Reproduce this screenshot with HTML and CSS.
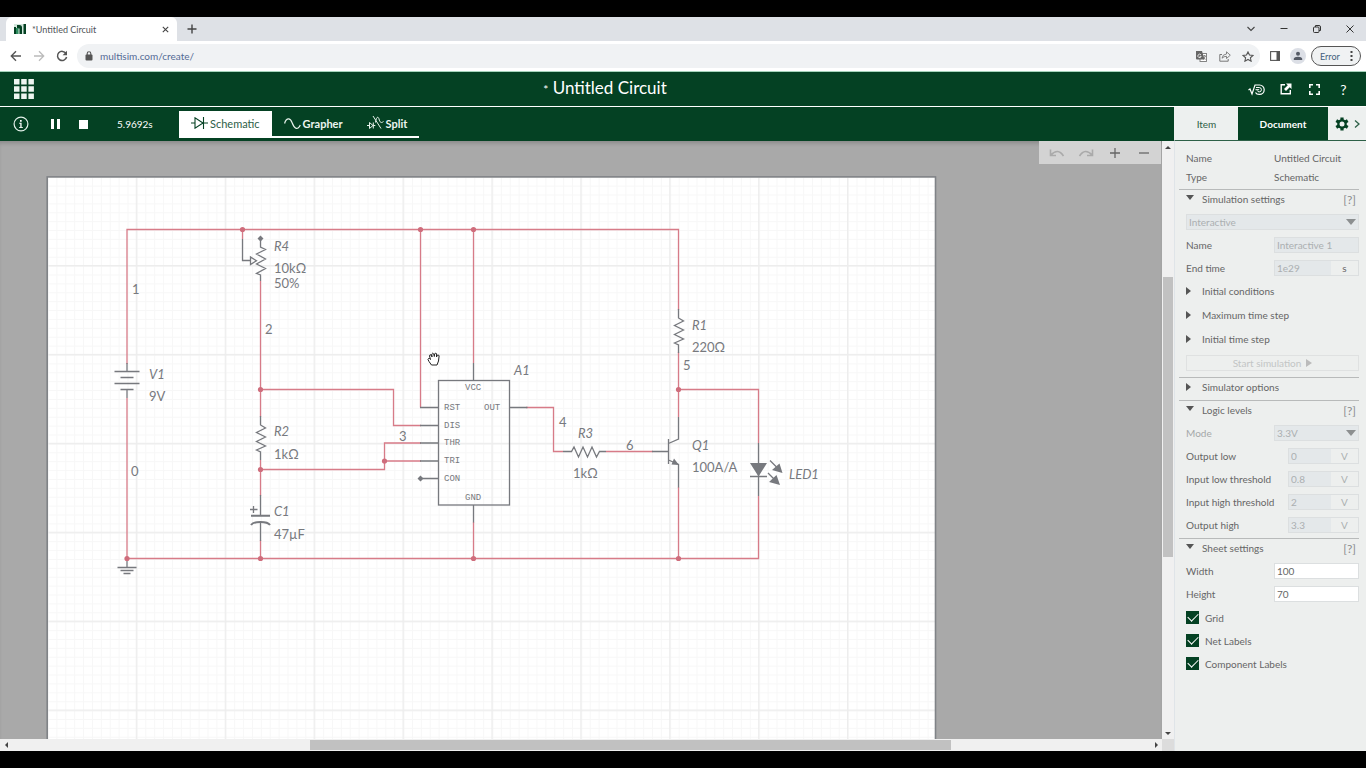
FILE: index.html
```html
<!DOCTYPE html>
<html lang="en">
<head>
<meta charset="utf-8">
<title>*Untitled Circuit</title>
<link rel="stylesheet" href="styles.css">
</head>
<body>
<div class="window">
  <div class="tabstrip">
    <div class="tab">
      <svg class="favicon" width="12" height="10" viewBox="0 0 12 10"><rect width="12" height="10" fill="#d3e6dc"/><path d="M0 3h2v7H0zM3 1h2.500q2.500 0 2.500 2.500V10H5.500V4.500H3zM9.500 0H12v10H9.500z" fill="#044123"/><path d="M2 4h2.500v6H2z" fill="#2c8a5e"/></svg>
      <span class="tab-title">*Untitled Circuit</span>
      <button class="ghost tab-close" aria-label="Close tab"><svg width="7" height="7" viewBox="0 0 7 7"><path d="M.8.8l5.400 5.400M6.200.8L.8 6.200" stroke="#444" stroke-width="1.100"/></svg></button>
    </div>
    <button class="ghost newtab" aria-label="New tab"><svg width="10" height="10" viewBox="0 0 10 10"><path d="M5 .5v9M.5 5h9" stroke="#444" stroke-width="1.400"/></svg></button>
    <div class="wincontrols">
      <button class="ghost" aria-label="Tab search"><svg width="10" height="8" viewBox="0 0 10 8"><path d="M1.500 2L5 5.500 8.500 2" fill="none" stroke="#444" stroke-width="1.100"/></svg></button>
      <button class="ghost" aria-label="Minimize"><svg width="8" height="8" viewBox="0 0 8 8"><path d="M.5 3.500h7" stroke="#333"/></svg></button>
      <button class="ghost" aria-label="Restore"><svg width="8" height="8" viewBox="0 0 8 8"><rect x=".5" y="2" width="5.500" height="5.500" rx="1" fill="none" stroke="#333"/><path d="M2.500 2V.5H6q1.500 0 1.500 1.500v3.500H6" fill="none" stroke="#333"/></svg></button>
      <button class="ghost" aria-label="Close"><svg width="8" height="8" viewBox="0 0 8 8"><path d="M.5.5l7 7M7.500.5l-7 7" stroke="#333"/></svg></button>
    </div>
  </div>

  <div class="navbar">
    <button class="ghost nav" aria-label="Back"><svg width="12" height="12" viewBox="0 0 12 12"><path d="M11 6H1.500M6 1.300L1.300 6 6 10.700" fill="none" stroke="#555" stroke-width="1.400"/></svg></button>
    <button class="ghost nav" aria-label="Forward"><svg width="12" height="12" viewBox="0 0 12 12"><path d="M1 6h9.500M6 1.300L10.700 6 6 10.700" fill="none" stroke="#bbb" stroke-width="1.300"/></svg></button>
    <button class="ghost nav" aria-label="Reload"><svg width="12" height="12" viewBox="0 0 12 12"><path d="M10 3.500A4.600 4.600 0 1 0 10.600 7" fill="none" stroke="#555" stroke-width="1.500"/><path d="M11 .8v4.400H6.600z" fill="#555"/></svg></button>
    <div class="omnibox">
      <svg width="8" height="10" viewBox="0 0 8 10"><rect x=".5" y="3.500" width="7" height="6" rx="1" fill="#555"/><path d="M2.200 4V2.600a1.800 1.800 0 0 1 3.600 0V4" fill="none" stroke="#555" stroke-width="1.100"/></svg>
      <input class="url" type="text" aria-label="Address" value="multisim.com/create/">
      <button class="ghost small" aria-label="Translate"><svg width="11" height="11" viewBox="0 0 11 11"><rect x="4" y="2.500" width="6.500" height="8" fill="#fff" stroke="#777" stroke-width=".9"/><path d="M0 0h6l2.500 8.500H1Q0 8.500 0 7.500z" fill="#666"/><path d="M5 4a1.700 1.700 0 1 0 .2 1.400H3.600" fill="none" stroke="#fff" stroke-width=".8"/><path d="M7 5h3M8.500 4v1M7.500 8.500L9.500 5M7.500 6l2 2.500" stroke="#666" stroke-width=".7" fill="none"/></svg></button>
      <button class="ghost small" aria-label="Share"><svg width="12" height="11" viewBox="0 0 12 11"><path d="M3 3.500H.8v6.700h8.400V8" fill="none" stroke="#777"/><path d="M3 7.200Q3.500 3.200 7.500 3V.8l3.800 3.400-3.800 3.300V5.300Q4.800 5.300 3 7.200z" fill="none" stroke="#777" stroke-width=".9"/></svg></button>
      <button class="ghost small" aria-label="Bookmark"><svg width="12" height="11" viewBox="0 0 12 11"><path d="M6 .9l1.500 3.200 3.500.4-2.600 2.300.7 3.400L6 8.500l-3.100 1.700.7-3.400L1 4.500l3.500-.4z" fill="none" stroke="#555" stroke-width="1.100"/></svg></button>
    </div>
    <button class="ghost side" aria-label="Side panel"><svg width="10" height="10" viewBox="0 0 10 10"><rect x=".6" y=".6" width="8.800" height="8.800" fill="none" stroke="#555" stroke-width="1.100"/><path d="M6.500 0H10v10H6.500z" fill="#555"/></svg></button>
    <button class="ghost avatar" aria-label="Profile"><svg width="10" height="10" viewBox="0 0 10 10"><circle cx="5" cy="2.800" r="2" fill="#555b66"/><path d="M.8 9V7.800Q1.200 5.800 5 5.800t4.200 2V9z" fill="#555b66"/></svg></button>
    <button class="errorpill">Error <svg width="3" height="10" viewBox="0 0 3 10"><path d="M.5 0h2v2h-2zM.5 4h2v2h-2zM.5 8h2v2h-2z" fill="#444"/></svg></button>
  </div>

  <header class="appbar">
    <button class="ghost appmenu" aria-label="Applications"><svg width="20" height="20" viewBox="0 0 20 20"><path d="M0 0h5.500v5.500H0zM7.200 0h5.500v5.500H7.200zM14.400 0h5.500v5.500h-5.500zM0 7.200h5.500v5.500H0zM7.200 7.200h5.500v5.500H7.200zM14.400 7.200h5.500v5.500h-5.500zM0 14.400h5.500v5.500H0zM7.200 14.400h5.500v5.500H7.200zM14.400 14.400h5.500v5.500h-5.500z" fill="#edf5f0"/></svg></button>
    <h1 class="doc-title"><span class="dirty">*</span> Untitled Circuit</h1>
    <div class="appactions">
      <button class="ghost" aria-label="Activate"><svg width="17" height="13" viewBox="0 0 17 13"><path d="M.5 7l1.500-1 2 5L7 2h4.500a4.700 4.700 0 0 1 0 9.400Q8.500 11.500 7.500 9.500" fill="none" stroke="#fff" stroke-width="1.200"/><path d="M8 4.500h3.200a2.200 2.200 0 0 1 0 4.400Q9.700 8.900 9.300 7.500M7.500 6.700h3.700" fill="none" stroke="#fff" stroke-width="1"/></svg></button>
      <button class="ghost" aria-label="Open in new window"><svg width="12" height="12" viewBox="0 0 12 12"><path d="M5 1.700H1.200v9.100h9.100V7" fill="none" stroke="#fff" stroke-width="1.400"/><path d="M6 .5h5.500V6L9.700 4.300 6 8 4 6l3.800-3.700z" fill="#fff"/></svg></button>
      <button class="ghost" aria-label="Full screen"><svg width="11" height="11" viewBox="0 0 11 11"><path d="M.8 4V.8H4M7 .8h3.200V4M10.200 7v3.200H7M4 10.200H.8V7" fill="none" stroke="#fff" stroke-width="1.600"/></svg></button>
      <button class="ghost help" aria-label="Help">?</button>
    </div>
  </header>

  <div class="toolbar">
    <div class="simbar">
      <button class="ghost info" aria-label="Information"><svg width="16" height="16" viewBox="0 0 16 16"><circle cx="8" cy="8" r="6.900" fill="none" stroke="#e3f0e9" stroke-width="1.200"/><path d="M7 4h1.700v1.700H7zM6.200 6.800h2.400V12H7.300V7.800H6.200zM6 11.300h4V12H6z" fill="#fff"/></svg></button>
      <button class="ghost pause" aria-label="Pause"><svg width="9" height="10" viewBox="0 0 9 10"><path d="M0 0h3v10H0zM6 0h3v10H6z" fill="#fff"/></svg></button>
      <button class="ghost stop" aria-label="Stop"><svg width="9" height="9" viewBox="0 0 9 9"><path d="M0 0h9v9H0z" fill="#fff"/></svg></button>
      <span class="simtime">5.9692s</span>
      <div class="views">
        <button class="view active"><svg width="17" height="12" viewBox="0 0 17 12"><path d="M0 6h4M4 .8v10.400L12 6zM12.500 0v12M12 6h5" fill="none" stroke="#044123" stroke-width="1.100"/></svg>Schematic</button>
        <button class="view"><svg width="17" height="13" viewBox="0 0 17 13"><path d="M.6 6.500C2 1 6 .2 8 5.500S13.500 14.500 16.300 8" fill="none" stroke="#e8f3ec" stroke-width="1.200"/></svg>Grapher</button>
        <button class="view"><svg width="17" height="14" viewBox="0 0 17 14"><path d="M0 9.500h2.500M2.500 6.500v6L6 9.500zM6.300 6.500v6M6.300 9.500h2M6 0l8 12.500M8.500 6.500c.5-5 2.500-7 3.500-3.500s2 4.500 4.500 2.500" fill="none" stroke="#e8f3ec" stroke-width="1"/></svg>Split</button>
      </div>
    </div>
    <div class="paneltabs">
      <button class="ptab">Item</button>
      <button class="ptab current">Document</button>
      <button class="ptab gear" aria-label="Settings"><svg width="25" height="14" viewBox="0 0 25 14"><g stroke="#044123" stroke-width="3.200"><path d="M7 .4v13.200M1.300 3.700l11.400 6.600M12.700 3.700L1.300 10.300"/></g><circle cx="7" cy="7" r="4.800" fill="#044123"/><circle cx="7" cy="7" r="2.500" fill="#edf0ef"/><path d="M20 3.500L24 7l-4 3.500" fill="none" stroke="#2d6047" stroke-width="1.300"/></svg></button>
    </div>
  </div>

  <main class="workspace">
    <div class="editor">
      <div class="canvas">
        <svg class="sheet" width="889" height="622" viewBox="47 177 889 622" role="img" aria-label="Schematic sheet">
          <defs>
            <pattern id="minor" x="47.500" y="176.700" width="8.890" height="8.890" patternUnits="userSpaceOnUse"><path d="M0 .5H8.890M.5 0V8.890" stroke="#f7f7f7"/></pattern>
            <pattern id="major" x="46.900" y="176.100" width="88.900" height="88.900" patternUnits="userSpaceOnUse"><path d="M0 .7H88.900M.7 0V88.900" stroke="#ededed" stroke-width="1.400"/></pattern>
          </defs>
          <rect x="47" y="177" width="889" height="622" fill="#fff"/>
          <rect x="47" y="177" width="889" height="622" fill="url(#minor)"/>
          <rect x="47" y="177" width="889" height="622" fill="url(#major)"/>
          <rect x="47.200" y="176.900" width="888.300" height="622" fill="none" stroke="#808387" stroke-width="1.600"/>
          <g class="wire">
            <path d="M127 364V229.500H678.500V310M242.500 229.500V239M420.500 229.500V407.500M473.500 229.500V363M260.500 281V417M260.500 389.500H393.500V425.500H421M260.500 460V496M260.500 469.500H384.500V443H421M384.500 461H421M127 398V558.500H758.500V496M260.500 540V558.500M473.500 522V558.500M526 407.500H553.500V451.500H563M606 451.500H653M678.500 352V417M678.500 389.500H758.500V443M678.500 487V558.500"/>
          </g>
          <g class="part">
            <path d="M127 363V371M114.500 371.500h25M120.500 377.500h13M114.500 383.500h25M120.500 389.500h13M127 390v8M127 559v8M117.500 567.500h19M120.500 570.500h13M123.500 573.500h7"/>
            <path d="M242.500 239v21.500h8M250.500 257v7.500l6-3.800zM260.500 239v8l5 2.500-9 4.500 9 5-9 5 9 4.500-9 5 4 1.500v6"/>
            <path d="M260.500 416v9l5 3-9 4.500 9 4.500-9 4.500 9 4.500-9 4 4 2v8"/>
            <path d="M678.500 309v9l5 3-9 4.500 9 4.500-9 4.500 9 4.500-9 4 4 2v8"/>
            <path d="M563 451.500h8.500l2.500-4.500 4.500 10 4.500-10 4.500 10 4.500-10 4.500 10 3-5.500h6.500"/>
            <path d="M260.500 495v20.500M260.500 522v19M250 509.500h7.500M253.500 506v7"/>
            <path d="M251 515.800h19M251 525q2-3 9.500-3t9.500 3" stroke-width="2"/>
            <rect x="438.500" y="380.500" width="71" height="124.500"/>
            <path d="M473.500 363v17.500M473.500 505v17.500M420 407.500h18.500M420 425.500h18.500M420 443h18.500M420 461h18.500M420 478.500h18.500M509.500 407.500h18"/>
            <path d="M652 451.500h17M668.500 439v25M668.500 443.500l10-4.500v-22M668.500 460l10 4.500v23"/>
            <path class="solid" d="M671.500 464.500l2.500-6 5 6.500z"/>
            <path d="M758.500 443v53M750 476.500h17M770 460.500l8 8M768 473l7 7"/>
            <path class="solid" d="M750 463h17l-8.500 13.500zM779.500 463.500l3 9.500-10.500-3zM776.500 475l3.500 10-11-3z"/>
            <path class="solid" d="M260.500 235.500l3 3-3 3-3-3zM420.500 475.500l3 3-3 3-3-3z"/>
          </g>
          <g class="node"><circle cx="242.500" cy="229.500" r="2.600"/><circle cx="420.500" cy="229.500" r="2.600"/><circle cx="473.500" cy="229.500" r="2.600"/><circle cx="260.500" cy="389.500" r="2.600"/><circle cx="260.500" cy="469.500" r="2.600"/><circle cx="384.500" cy="461" r="2.600"/><circle cx="678.500" cy="389.500" r="2.600"/><circle cx="127" cy="558.500" r="2.600"/><circle cx="260.500" cy="558.500" r="2.600"/><circle cx="473.500" cy="558.500" r="2.600"/><circle cx="678.500" cy="558.500" r="2.600"/></g>
          <g class="label">
            <text x="132" y="294">1</text><text x="265" y="334">2</text><text x="399" y="441">3</text><text x="559" y="427">4</text><text x="683" y="370">5</text><text x="626" y="450">6</text><text x="131" y="476">0</text>
            <text x="149" y="401">9V</text><text x="274" y="273">10kΩ</text><text x="274" y="288">50%</text><text x="274" y="459">1kΩ</text><text x="274" y="539">47µF</text><text x="573" y="478">1kΩ</text><text x="692" y="352">220Ω</text><text x="692" y="472">100A/A</text>
          </g>
          <g class="label refdes">
            <text x="149" y="379">V1</text><text x="274" y="251">R4</text><text x="274" y="436">R2</text><text x="274" y="516">C1</text><text x="514" y="375">A1</text><text x="578" y="438">R3</text><text x="692" y="330">R1</text><text x="692" y="450">Q1</text><text x="789" y="479">LED1</text>
          </g>
          <g class="pin">
            <text x="465" y="390">VCC</text><text x="444" y="410">RST</text><text x="484" y="410">OUT</text><text x="444" y="428">DIS</text><text x="444" y="445">THR</text><text x="444" y="463">TRI</text><text x="444" y="481">CON</text><text x="465" y="500">GND</text>
          </g>
          <path d="M431.500 365L429 361.500Q427.200 359 428.500 358.500t2 1L429.500 356q.2-2 1.700-1l.8 2-.2-3q.9-1.800 2 0l.5 2.500.4-2.800q1.300-1.400 1.900.3l-.1 3 .9-1.800q1.500-.8 1.700.8L438.500 361l-1.500 4z" fill="#fff" stroke="#222"/>
        </svg>
        <div class="zoombar">
          <button class="ghost" aria-label="Undo"><svg width="16" height="10" viewBox="0 0 16 10"><path d="M1.500 1.500v6h5.500M2 7Q9-.5 14.500 8" fill="none" stroke="#aaa" stroke-width="1.600"/></svg></button>
          <button class="ghost" aria-label="Redo"><svg width="16" height="10" viewBox="0 0 16 10"><path d="M14.500 1.500v6H9M14 7Q7-.5 1.500 8" fill="none" stroke="#aaa" stroke-width="1.600"/></svg></button>
          <button class="ghost" aria-label="Zoom in"><svg width="10" height="10" viewBox="0 0 10 10"><path d="M5 0v10M0 5h10" stroke="#666" stroke-width="1.300"/></svg></button>
          <button class="ghost" aria-label="Zoom out"><svg width="10" height="10" viewBox="0 0 10 10"><path d="M0 5h10" stroke="#666" stroke-width="1.300"/></svg></button>
        </div>
      </div>
      <div class="vscroll"><span class="arrow up"></span><span class="thumb"></span><span class="arrow down"></span></div>
      <div class="hscroll"><span class="arrow left"></span><span class="thumb"></span><span class="arrow right"></span></div>
      <div class="corner"></div>
    </div>

    <aside class="panel">
      <div class="props">
        <div class="prop"><span>Name</span><span>Untitled Circuit</span></div>
        <div class="prop"><span>Type</span><span>Schematic</span></div>
      </div>
      <section class="section">
        <div class="sechead"><i class="tri open"></i><h2>Simulation settings</h2><a href="#help-sim">[?]</a></div>
        <div class="row full"><div class="selectbox"><select aria-label="Simulation type" disabled><option>Interactive</option></select></div></div>
        <div class="row"><label for="simname">Name</label><input id="simname" value="Interactive 1" disabled></div>
        <div class="row"><label for="endtime">End time</label><div class="unitfield"><input id="endtime" value="1e29" disabled><span class="unit dark">s</span></div></div>
        <div class="sub"><i class="tri"></i>Initial conditions</div>
        <div class="sub"><i class="tri"></i>Maximum time step</div>
        <div class="sub"><i class="tri"></i>Initial time step</div>
        <button class="start" disabled>Start simulation <i class="play"></i></button>
      </section>
      <section class="section">
        <div class="sechead"><i class="tri"></i><h2>Simulator options</h2></div>
      </section>
      <section class="section">
        <div class="sechead"><i class="tri open"></i><h2>Logic levels</h2><a href="#help-logic">[?]</a></div>
        <div class="row"><label class="muted" for="mode">Mode</label><div class="selectbox"><select id="mode" disabled><option>3.3V</option></select></div></div>
        <div class="row wide"><label for="ol">Output low</label><div class="unitfield"><input id="ol" value="0" disabled><span class="unit">V</span></div></div>
        <div class="row wide"><label for="il">Input low threshold</label><div class="unitfield"><input id="il" value="0.8" disabled><span class="unit">V</span></div></div>
        <div class="row wide"><label for="ih">Input high threshold</label><div class="unitfield"><input id="ih" value="2" disabled><span class="unit">V</span></div></div>
        <div class="row wide"><label for="oh">Output high</label><div class="unitfield"><input id="oh" value="3.3" disabled><span class="unit">V</span></div></div>
      </section>
      <section class="section">
        <div class="sechead"><i class="tri open"></i><h2>Sheet settings</h2><a href="#help-sheet">[?]</a></div>
        <div class="row"><label for="sw">Width</label><input id="sw" value="100"></div>
        <div class="row"><label for="sh">Height</label><input id="sh" value="70"></div>
        <div class="checks">
          <label class="check"><input type="checkbox" checked>Grid</label>
          <label class="check"><input type="checkbox" checked>Net Labels</label>
          <label class="check"><input type="checkbox" checked>Component Labels</label>
        </div>
      </section>
    </aside>
  </main>
</div>
</body>
</html>
```
FILE: styles.css
```css
* { box-sizing: border-box; }
body { margin: 0; background: #000; font-family: Lato, "Open Sans", sans-serif; font-size: 10px; color: #666; }
button, input, select { font: inherit; color: inherit; }
svg { display: block; flex: none; }
h1, h2 { margin: 0; font: inherit; }
.window { height: 100vh; padding: 17px 0; display: flex; flex-direction: column; overflow: hidden; }
.ghost { border: 0; padding: 0; background: none; display: flex; align-items: center; justify-content: center; }

/* browser frame */
.tabstrip { height: 24px; flex: none; background: #dee1e6; display: flex; align-items: center; padding-left: 6px; }
.tab { width: 171px; height: 24px; padding: 0 8px; background: #fff; border-radius: 6px 6px 0 0; display: flex; align-items: center; gap: 6px; }
.tab-title { flex: 1; font-size: 9px; color: #505357; }
.newtab { width: 30px; height: 24px; }
.wincontrols { margin-left: auto; display: flex; height: 20px; }
.wincontrols button { width: 33px; }
.navbar { height: 30px; flex: none; background: #fff; display: flex; align-items: center; padding: 0 5px 0 4px; }
.nav { width: 23px; height: 24px; }
.omnibox { flex: 1; margin-left: 4px; height: 24px; border-radius: 12px; background: #f0f2f4; display: flex; align-items: center; padding: 0 1px 0 8px; }
.url { flex: 1; min-width: 0; margin-left: 7px; padding: 0; border: 0; background: none; font-size: 10px; color: #536a94; }
.small { width: 23px; height: 20px; }
.side { width: 30px; }
.avatar { width: 16px; height: 16px; border-radius: 50%; background: #dcdfe6; }
.errorpill { width: 50px; height: 20px; margin-left: 5px; padding: 0 7px 0 8px; border: 1px solid #555; border-radius: 10px; background: #f0f2f3; font-size: 9px; color: #42607d; display: flex; align-items: center; justify-content: space-between; }

/* application bars */
.appbar { height: 36px; flex: none; background: #044123; border-top: 1px solid #a5d3bb; border-bottom: 1px solid #fff; display: grid; grid-template-columns: 36px 1fr 192px; align-items: center; color: #fff; }
.appmenu { width: 20px; height: 20px; margin-left: 14px; }
.doc-title { font-size: 17px; line-height: 20px; text-align: center; }
.dirty { font-size: 12px; }
.appactions { justify-self: end; display: flex; padding-right: 8px; }
.appactions button { width: 29px; height: 20px; color: #fff; }
.appactions .help { font-size: 14px; }
.toolbar { height: 34px; flex: none; display: flex; background: #044123; color: #fff; }
.simbar { flex: 1; display: flex; align-items: center; }
.info { width: 32px; height: 24px; margin-left: 5px; }
.pause { width: 28px; height: 24px; margin-left: 4px; }
.stop { width: 28px; height: 24px; }
.simtime { width: 82px; padding-left: 20px; }
.views { display: flex; }
.view { height: 27px; padding: 0 12px; border: 0; border-bottom: 2px solid #fff; background: none; font-size: 11px; font-weight: bold; color: #edf5f0; display: flex; align-items: center; gap: 2px; }
.view.active { background: #fff; color: #2d6047; font-weight: normal; }
.paneltabs { width: 192px; display: grid; grid-template-columns: 63px 90px 1fr; border-left: 1px solid #edf0ef; border-bottom: 1px solid #2d6047; }
.ptab { border: 0; padding: 0; background: #edf0ef; color: #2d6047; }
.ptab.current { background: #044123; color: #fff; font-weight: bold; }
.gear { display: flex; align-items: center; justify-content: center; }

/* schematic editor */
.workspace { flex: 1; min-height: 0; display: flex; }
.editor { flex: 1; min-width: 0; display: grid; grid-template: minmax(0, 1fr) 12px / minmax(0, 1fr) 12px; background: #f0f0f0; }
.canvas { position: relative; overflow: hidden; background: #a9a9a9; padding: 36px 47px; box-shadow: inset 0 4px 4px -2px #888; }
.sheet { overflow: visible; }
.wire { fill: none; stroke: #d77b88; stroke-width: 1.3; }
.part { fill: none; stroke: #77797e; stroke-width: 1.3; }
.part .solid { fill: #77797e; stroke: none; }
.node { fill: #cf6d7c; }
.label { font: 13px Lato, sans-serif; fill: #77797e; }
.refdes { font-style: italic; }
.pin { font: 9px "Liberation Mono", monospace; fill: #77797e; }
.zoombar { position: absolute; top: 0; right: 1px; padding: 0 3px; height: 23px; display: flex; align-items: center; background: #d3d3d3; }
.zoombar button { width: 29px; height: 23px; }
.vscroll { display: grid; grid-template-rows: 12px 124fr 280fr 170fr 12px; }
.vscroll .thumb { grid-row: 3; margin: 0 1px; }
.hscroll { display: grid; grid-template-columns: 12px 298fr 641fr 199fr 12px; }
.hscroll .thumb { grid-column: 3; margin: 1px 0; }
.thumb { background: #c1c1c1; }
.corner { background: #dcdcdc; }
.arrow { place-self: center; border: 3px solid transparent; }
.up { grid-row: 1; border-top: 0; border-bottom-color: #444; }
.down { grid-row: 5; border-bottom: 0; border-top-color: #444; }
.left { grid-column: 1; border-left: 0; border-right-color: #444; }
.right { grid-column: 5; border-right: 0; border-left-color: #444; }

/* document panel */
.panel { width: 192px; padding: 7px 7px 0 4px; border-left: 1px solid #dfe4e8; background: #edefee; overflow: hidden; }
.props { padding-bottom: 3px; }
.prop { height: 19px; padding-left: 7px; display: grid; grid-template-columns: 88px 1fr; align-items: center; }
.section { border-top: 1px solid #b8baba; padding-bottom: 2px; }
.sechead { height: 20px; padding: 0 3px 2px 7px; display: flex; align-items: center; }
.sechead h2 { flex: 1; }
.sechead a { color: #8b8d8e; font-size: 12px; text-decoration: none; }
.tri { width: 16px; flex: none; }
.tri::before { content: ""; display: block; width: 0; border: 4px solid transparent; border-left: 5px solid #555; border-right: 0; }
.tri.open::before { border: 4px solid transparent; border-top: 5px solid #555; border-bottom: 0; margin-bottom: 4px; }
.sub { height: 24px; padding-left: 7px; display: flex; align-items: center; }
.row { height: 23px; padding-left: 7px; display: grid; grid-template-columns: 88px minmax(0, 1fr); align-items: center; }
.row.full { grid-template-columns: minmax(0, 1fr); }
.row.wide { grid-template-columns: 102px minmax(0, 1fr); }
.row input, .row select { width: 100%; min-width: 0; height: 16px; padding: 0 2px; border: 1px solid #dcdfe0; border-radius: 0; background: #fff; color: #666; }
.row input:disabled, .row select:disabled { background: #e4e8ea; color: #abafb1; opacity: 1; }
.row select { appearance: none; display: block; }
.selectbox { position: relative; }
.selectbox::after { content: ""; position: absolute; right: 3px; top: 5px; border: 5px solid transparent; border-top: 6px solid #8c8f90; border-bottom: 0; }
.unitfield { display: grid; grid-template-columns: minmax(0, 1fr) 28px; }
.unitfield input { border-right: 0; }
.unit { border: 1px solid #dcdfe0; border-left: 0; line-height: 14px; text-align: center; color: #abafb1; }
.unit.dark { color: #666; }
.muted { color: #a5a8a9; }
.start { display: flex; align-items: center; justify-content: center; gap: 5px; width: calc(100% - 7px); height: 16px; margin: 4px 0 4px 7px; padding: 0; border: 1px solid #dfe1e1; background: none; color: #c2c5c5; }
.play { border: 4px solid transparent; border-left: 6px solid #bbb; border-right: 0; }
.checks { padding-top: 1px; }
.check { height: 23px; padding-left: 7px; display: flex; align-items: center; gap: 6px; }
.check input { appearance: none; width: 13px; height: 13px; margin: 0; background: #044123; display: grid; place-items: center; }
.check input:checked::before { content: ""; width: 9px; height: 5px; margin-bottom: 3px; border: solid #fff; border-width: 0 0 1px 1px; transform: rotate(-45deg); }
```
